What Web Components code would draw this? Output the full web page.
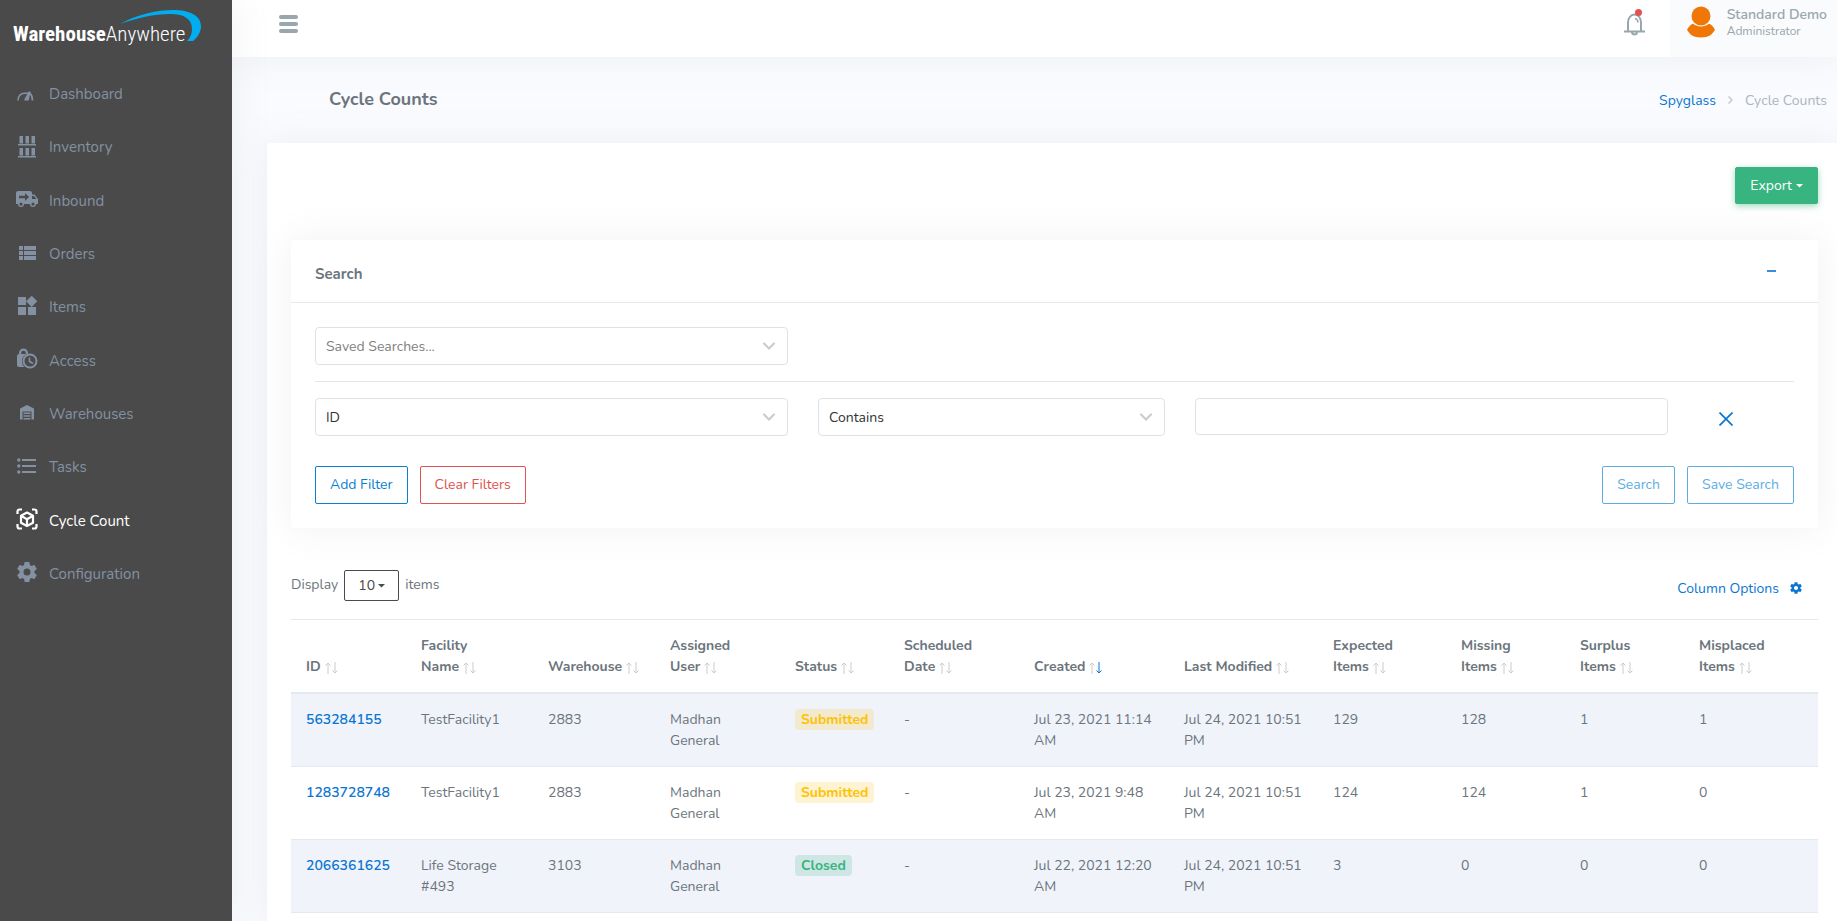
<!DOCTYPE html>
<html lang="en">
<head>
<meta charset="utf-8">
<title>Cycle Counts</title>
<style>
html,body{margin:0;background:#fafbfe}
body{font:14px/21px Nunito,Roboto,sans-serif;color:#6c757d;overflow:hidden}
</style>
</head>
<body>
<wa-app>
  <wa-sidebar slot="side">
    <wa-nav-item icon="dashboard">Dashboard</wa-nav-item>
    <wa-nav-item icon="inventory">Inventory</wa-nav-item>
    <wa-nav-item icon="inbound">Inbound</wa-nav-item>
    <wa-nav-item icon="orders">Orders</wa-nav-item>
    <wa-nav-item icon="items">Items</wa-nav-item>
    <wa-nav-item icon="access">Access</wa-nav-item>
    <wa-nav-item icon="warehouses">Warehouses</wa-nav-item>
    <wa-nav-item icon="tasks">Tasks</wa-nav-item>
    <wa-nav-item icon="cycle" active>Cycle Count</wa-nav-item>
    <wa-nav-item icon="cog">Configuration</wa-nav-item>
  </wa-sidebar>
  <wa-topbar slot="top"><span slot="name">Standard Demo</span><span slot="role">Administrator</span></wa-topbar>
  <wa-page-head slot="head">Cycle Counts</wa-page-head>
  <wa-button slot="actions" kind="solid" caret>Export</wa-button>
  <wa-search-panel></wa-search-panel>
  <wa-list-bar></wa-list-bar>
  <wa-count-table></wa-count-table>
</wa-app>

<script>
const ICONS = {
  dashboard:'<path d="M3 19.500c0-4.500 2.500-7.300 6.500-7.300h5" fill="none" stroke="currentColor" stroke-width="1.600"/><path d="M14.500 12c2 1.500 2.900 4 2.900 7.500" fill="none" stroke="currentColor" stroke-width="1.800"/><path d="M13.800 10.500H15.500L13.800 19.500H9.300c0-1.200.3-2 1-3z" fill="currentColor"/>',
  inventory:'<path fill="currentColor" d="M3 10h18v1.500H3zM3 22h18v1.500H3zM4.500 2H8v7.500H4.500zM10.500 2H14v7.500h-3.500zM16.500 2H20v7.500h-3.500zM4.500 14H8v7.500H4.500zM10.500 14H14v7.500h-3.500zM16.500 14H20v7.500h-3.500z"/>',
  inbound:'<path fill="currentColor" fill-rule="evenodd" d="M3 4h12a2 2 0 0 1 2 2v1.500h2.500L23 12v5h-2a3 3 0 0 1-6 0H9a3 3 0 0 1-6 0H1V6a2 2 0 0 1 2-2zm1 4.800v2.400h6V14l4-4-4-4v2.800zM17 9v3h4.500L19 9zM6 15.500a1.600 1.600 0 1 0 0 3.200 1.600 1.600 0 0 0 0-3.200zm12 0a1.600 1.600 0 1 0 0 3.200 1.600 1.600 0 0 0 0-3.200z"/>',
  orders:'<path fill="currentColor" d="M4 5h4v4H4zM9 5h12v4H9zM4 10h4v4H4zM9 10h12v4H9zM4 15h4v4H4zM9 15h12v4H9z"/>',
  items:'<path fill="currentColor" d="M3 3h8v8H3zM3 13h8v8H3zM13 13h8v8h-8zM16.700 1.700L11 7.300l5.700 5.700 5.600-5.700z"/>',
  access:'<path fill="currentColor" fill-rule="evenodd" d="M4 7V6a4.500 4.500 0 0 1 9 0v.8a8 8 0 0 0-6 7.700c0 2.300.9 4 2.500 5.500H4a2 2 0 0 1-2-2V9a2 2 0 0 1 2-2zm2.200 0h4.600V6a2.300 2.300 0 0 0-4.600 0z"/><circle cx="15" cy="14" r="6.500" fill="none" stroke="currentColor" stroke-width="2"/><path d="M14.500 10.500V14.500l3.500 2" fill="none" stroke="currentColor" stroke-width="1.600"/>',
  warehouses:'<path fill="currentColor" fill-rule="evenodd" d="M5 19.500V8.500L12 5l7 3.500v11h-2.500v-8h-9v8zM8.500 12.500h7V14h-7zM8.500 15.200h7v1.500h-7zM8.500 18h7v1.500h-7z"/>',
  tasks:'<path fill="currentColor" d="M7 5h14v2H7zM7 11h14v2H7zM7 17h14v2H7z"/><g fill="currentColor"><circle cx="3.800" cy="6" r="1.700"/><circle cx="3.800" cy="12" r="1.700"/><circle cx="3.800" cy="18" r="1.700"/></g>',
  cycle:'<path d="M2.500 7V4.500a2 2 0 0 1 2-2H7M17 2.500h2.500a2 2 0 0 1 2 2V7M21.500 17v2.500a2 2 0 0 1-2 2H17M7 21.500H4.500a2 2 0 0 1-2-2V17" fill="none" stroke="currentColor" stroke-width="2.200"/><path d="M12 5.500l6 3.300v6.900l-6 3.300-6-3.300V8.800zM6 8.800l6 3.400 6-3.400M12 12.200V19" fill="none" stroke="currentColor" stroke-width="2.200" stroke-linejoin="round"/>',
  cog:'<path fill="currentColor" d="M12 15.500A3.500 3.500 0 0 1 8.500 12 3.500 3.500 0 0 1 12 8.500a3.500 3.500 0 0 1 3.500 3.500 3.500 3.500 0 0 1-3.500 3.500m7.430-2.530c.04-.32.07-.64.07-.97s-.03-.66-.07-1l2.110-1.630c.19-.15.24-.42.12-.64l-2-3.460c-.12-.22-.39-.31-.61-.22l-2.490 1c-.52-.39-1.060-.73-1.690-.98l-.37-2.650A.506.506 0 0 0 14 2h-4c-.25 0-.46.18-.5.420l-.37 2.650c-.63.25-1.170.59-1.690.98l-2.490-1c-.22-.09-.49 0-.61.22l-2 3.460c-.13.22-.07.49.12.640L4.570 11c-.04.340-.07.670-.07 1s.03.650.07.970l-2.110 1.660c-.19.150-.25.420-.12.640l2 3.460c.12.220.39.300.61.220l2.490-1.010c.52.400 1.060.740 1.690.990l.37 2.650c.04.240.25.420.5.420h4c.25 0 .46-.18.5-.42l.37-2.650c.63-.26 1.170-.59 1.690-.99l2.490 1.010c.22.080.49 0 .61-.22l2-3.460c.12-.22.07-.49-.12-.64z"/>'
};
const svg = (name, size) => `<svg viewBox="0 0 24 24" width="${size}" height="${size}" aria-hidden="true">${ICONS[name]}</svg>`;
const caret = '<svg class="caret" width="7" height="4" viewBox="0 0 7 4" aria-hidden="true"><path d="M0 0h7L3.500 3.500z" fill="currentColor"/></svg>';

function component(name, render) {
  customElements.define(name, class extends HTMLElement {
    constructor() {
      super();
      this.attachShadow({mode: 'open'});
    }
    connectedCallback() {
      this.shadowRoot.innerHTML = '<style>*{box-sizing:border-box}button,select,input{font:inherit;color:inherit;margin:0}a{text-decoration:none}svg{display:block;flex:none}</style>' + render(this);
    }
  });
}

component('wa-app', () => `
<style>
:host{display:grid;grid-template-columns:232px minmax(0,1fr);min-height:100vh}
.main{display:flex;flex-direction:column;min-width:0}
.card{flex:1;margin-left:35px;padding:24px 19px 0 24px;background:#fff;border-radius:4px 0 0 0;box-shadow:0 0 35px rgba(154,161,171,.15)}
.actions{display:flex;justify-content:flex-end;margin-bottom:36px}
</style>
<slot name="side"></slot>
<div class="main">
  <slot name="top"></slot>
  <slot name="head"></slot>
  <main class="card"><div class="actions"><slot name="actions"></slot></div><slot></slot></main>
</div>`);

component('wa-sidebar', () => `
<style>
:host{display:block;background:#4a4a4a;position:relative;z-index:2;box-shadow:0 0 35px rgba(154,161,171,.15)}
.logo{display:block;height:68px}
nav{display:grid;grid-auto-rows:1fr;height:533px}
text{font-family:"Roboto Condensed","Liberation Sans Narrow",Roboto,sans-serif;font-size:21px;fill:#fff}
</style>
<a class="logo" href="#" aria-label="WarehouseAnywhere home">
  <svg width="220" height="60" viewBox="0 0 220 60">
    <text x="13" y="41"><tspan font-weight="700">Warehouse</tspan><tspan font-weight="300">Anywhere</tspan></text>
    <path fill="#00adef" d="M120 24C138 14 158 10 173 10c17 0 28 6 28 16 0 6-3 11-8 15h-6c4-4 5-8 5-12 0-11-9-15-22-15-16 0-33 4-50 10z"/>
  </svg>
</a>
<nav><slot></slot></nav>`);

component('wa-nav-item', el => `
<style>
:host{display:block}
a{display:flex;align-items:center;gap:10px;height:100%;padding-left:15px;font-size:15px;color:${el.hasAttribute('active') ? '#fff' : '#8391a2'}}
svg{margin-bottom:4px}
</style>
<a href="#">${svg(el.getAttribute('icon'), 24)}<slot></slot></a>`);

component('wa-topbar', () => `
<style>
:host{display:flex;height:57px;background:#fff;color:#98a6ad;position:relative;z-index:1;box-shadow:0 0 35px rgba(154,161,171,.15)}
button{border:0;background:none;padding:0;display:block}
.menu{margin:15px auto auto 47px}
.bell{margin:8px 25px auto 0}
.user{display:flex;gap:12px;padding:6px 10px 0 17px;background:#fafbfd;color:#98a6ad}
.user div{display:flex;flex-direction:column}
b{font-size:14px;line-height:18px;font-weight:600}
small{font-size:12px;line-height:14px}
</style>
<button class="menu" aria-label="Menu"><svg width="19" height="18" viewBox="0 0 19 18"><path d="M2 2h15M2 9h15M2 16h15" stroke="#98a6ad" stroke-width="4" stroke-linecap="round"/></svg></button>
<button class="bell" aria-label="Notifications"><svg width="21" height="28" viewBox="0 0 21 28">
  <path d="M0 23.500h21M4 23V14.500c0-4 2.500-8 6.500-8s6.500 4 6.500 8V23M8 24.500c.5 2.500 4.500 2.500 5 0" fill="none" stroke="#98a6ad" stroke-width="2"/>
  <path d="M11 10.500c1.800.3 2.800 1.600 3 4" fill="none" stroke="#98a6ad" stroke-width="1.500"/>
  <circle cx="14.500" cy="4.500" r="3.500" fill="#e0534f"/></svg></button>
<a class="user" href="#"><svg width="28" height="32" viewBox="0 0 28 32"><circle cx="14" cy="10" r="9.500" fill="#f07706"/><path fill="#f07706" d="M6 17.800c5 3.500 11 3.500 16 0 2.500.8 4.500 3 6 6-3 5-6 7.700-14 7.700S3 28.800 0 23.800c1.500-3 3.500-5.200 6-6z"/></svg>
<div><b><slot name="name"></slot></b><small><slot name="role"></slot></small></div></a>`);

component('wa-page-head', () => `
<style>
:host{display:flex;justify-content:space-between;align-items:center;height:86px;padding:0 10px 0 97px}
h1{margin:0;padding-bottom:2px;font-size:18px;font-weight:700}
nav{display:flex;align-items:center;gap:12px;color:#adb5bd}
a{color:#0b76d1}
</style>
<h1><slot></slot></h1>
<nav aria-label="Breadcrumb"><a href="#">Spyglass</a><svg width="5" height="8" viewBox="0 0 5 8"><path d="M.5.5L4 4 .5 7.500" fill="none" stroke="#c3c9d0" stroke-width="1.500"/></svg><span>Cycle Counts</span></nav>`);

component('wa-button', el => {
  const kind = el.getAttribute('kind');
  const color = {primary:'#0780d1', danger:'#e0534f', faded:'#5caee2', solid:'#fff'}[kind];
  return `
<style>
:host{display:block}
button{display:flex;align-items:center;gap:4px;height:38px;padding:0 14px 2px;border-radius:2px;border:1px solid ${color};background:#fff;color:${color}}
button.solid{height:37px;padding:0 14px;background:#37b47f;border-color:#37b47f;box-shadow:0 2px 6px rgba(55,180,127,.5)}
</style>
<button class="${kind}"><slot></slot>${el.hasAttribute('caret') ? caret : ''}</button>`;
});

component('wa-select', el => `
<style>
:host{display:grid}
select,svg{grid-area:1/1}
select{appearance:none;width:100%;height:38px;padding:0 40px 0 10px;border:1px solid #dee2e6;border-radius:4px;background:#fff;color:${el.hasAttribute('muted') ? '#808080' : '#333'}}
svg{place-self:center end;margin-right:12px;pointer-events:none}
</style>
<select aria-label="${el.getAttribute('label')}"><option>${el.getAttribute('value')}</option></select>
<svg width="14" height="10" viewBox="0 0 14 10"><path d="M2 2.500l5 5 5-5" fill="none" stroke="#ccc" stroke-width="2.200" stroke-linecap="round"/></svg>`);

component('wa-search-panel', () => `
<style>
:host{display:block;background:#fff;border-radius:4px;box-shadow:0 0 35px rgba(154,161,171,.15)}
header{display:flex;justify-content:space-between;align-items:center;height:63px;padding:6px 42px 0 24px;border-bottom:1px solid #e3eaef}
h2{margin:0;font-size:15px;font-weight:700}
.plain{border:0;background:none;padding:0;color:#0b76d1;display:block}
.toggle{padding:0 0 6px}
.body{padding:24px}
.row{display:grid;grid-template-columns:repeat(12,minmax(0,1fr));gap:30px}
.c4{grid-column:span 4}.c3{grid-column:span 3}
hr{border:0;border-top:1px solid #e3e6ea;margin:16px 0}
input{width:100%;height:37px;border:1px solid #dee2e6;border-radius:4px;padding:0 12px;background:#fff}
.x{margin:14px 0 auto 21px}
.buttons{display:flex;gap:12px;margin-top:30px}
.push{margin-left:auto}
</style>
<header><h2>Search</h2><button class="plain toggle" aria-label="Collapse"><svg width="9" height="2"><path d="M0 1h9" stroke="#3c8cd8" stroke-width="2"/></svg></button></header>
<div class="body">
  <div class="row"><wa-select class="c4" label="Saved searches" value="Saved Searches..." muted></wa-select></div>
  <hr>
  <div class="row">
    <wa-select class="c4" label="Field" value="ID"></wa-select>
    <wa-select class="c3" label="Comparison" value="Contains"></wa-select>
    <div class="c4"><input type="text" aria-label="Filter value"></div>
    <button class="plain x" aria-label="Remove filter"><svg width="14" height="14" viewBox="0 0 14 14"><path d="M.5.5l13 13M13.500.5L.5 13.500" stroke="currentColor" stroke-width="1.700"/></svg></button>
  </div>
  <div class="buttons">
    <wa-button kind="primary">Add Filter</wa-button><wa-button kind="danger">Clear Filters</wa-button>
    <wa-button kind="faded" class="push">Search</wa-button><wa-button kind="faded">Save Search</wa-button>
  </div>
</div>`);

component('wa-list-bar', () => `
<style>
:host{display:flex;justify-content:space-between;align-items:center;margin:42px 0 18px}
label{display:flex;align-items:flex-start;gap:6px;line-height:29px}
.size{display:grid}
select,.size svg{grid-area:1/1}
select{appearance:none;width:55px;height:31px;padding:0 13px;border:1px solid #4a4a4a;border-radius:2px;background:#fff;color:#4a4a4a}
.size svg{place-self:center end;margin-right:14px;pointer-events:none;color:#4a4a4a}
a{display:flex;align-items:center;gap:10px;margin-right:15px;padding-top:5px;color:#0b76d1}
</style>
<label>Display<span class="size"><select><option>10</option></select>${caret}</span>items</label>
<a href="#">Column Options${svg('cog', 14)}</a>`);

component('wa-badge', el => {
  const rgb = el.getAttribute('tone') === 'success' ? '55,180,127' : '255,193,7';
  return `
<style>
:host{display:inline-block;padding:0 6px;border-radius:4px;font-weight:700;color:rgb(${rgb});background:rgba(${rgb},.18)}
</style><slot></slot>`;
});

const COLUMNS = [['ID',115],['Facility Name',127],['Warehouse',122],['Assigned User',125],['Status',109],['Scheduled Date',130],
  ['Created',150],['Last Modified',149],['Expected Items',128],['Missing Items',119],['Surplus Items',119],['Misplaced Items',134]];
const ROWS = [
  ['563284155','TestFacility1','2883','Madhan General','Submitted','-','Jul 23, 2021 11:14 AM','Jul 24, 2021 10:51 PM','129','128','1','1'],
  ['1283728748','TestFacility1','2883','Madhan General','Submitted','-','Jul 23, 2021 9:48 AM','Jul 24, 2021 10:51 PM','124','124','1','0'],
  ['2066361625','Life Storage #493','3103','Madhan General','Closed','-','Jul 22, 2021 12:20 AM','Jul 24, 2021 10:51 PM','3','0','0','0']
];
const heading = ([title]) => {
  const words = title.split(' ');
  const last = words.pop();
  const down = title === 'Created' ? '#0b76d1' : '#ccc';
  return `<th scope="col"${title === 'Created' ? ' aria-sort="descending"' : ''}><button>${words.join(' ')} <span>${last}<svg width="13" height="12" viewBox="0 0 13 12" aria-hidden="true">
    <path d="M3 12V1M.5 3.500L3 1l2.500 2.500" fill="none" stroke="#ccc"/><path d="M10 0v11M7.500 8.500L10 11l2.500-2.500" fill="none" stroke="${down}"/></svg></span></button></th>`;
};
const cell = (text, i) => {
  if (i === 0) return `<td><a href="#">${text}</a></td>`;
  if (i === 4) return `<td><wa-badge tone="${text === 'Closed' ? 'success' : 'warning'}">${text}</wa-badge></td>`;
  return `<td>${text}</td>`;
};
component('wa-count-table', () => `
<style>
:host{display:block}
table{width:100%;table-layout:fixed;border-spacing:0}
th,td{padding:15px;text-align:left}
th{vertical-align:bottom;border-top:1px solid #e3eaef;border-bottom:2px solid #e3eaef}
td{height:73px;vertical-align:top;border-bottom:1px solid #e3eaef}
tbody tr:nth-child(odd){background:#f0f3fa}
button{display:block;border:0;padding:0;background:none;text-align:left;font-weight:700}
th span{white-space:nowrap}
th svg{display:inline-block;margin-left:4px;vertical-align:-3px}
a{color:#0b76d1;font-weight:600}
</style>
<table>
<colgroup>${COLUMNS.map(([, w]) => `<col style="width:${w}px">`).join('')}</colgroup>
<thead><tr>${COLUMNS.map(heading).join('')}</tr></thead>
<tbody>${ROWS.map(r => `<tr>${r.map(cell).join('')}</tr>`).join('')}</tbody>
</table>`);
</script>
</body>
</html>
